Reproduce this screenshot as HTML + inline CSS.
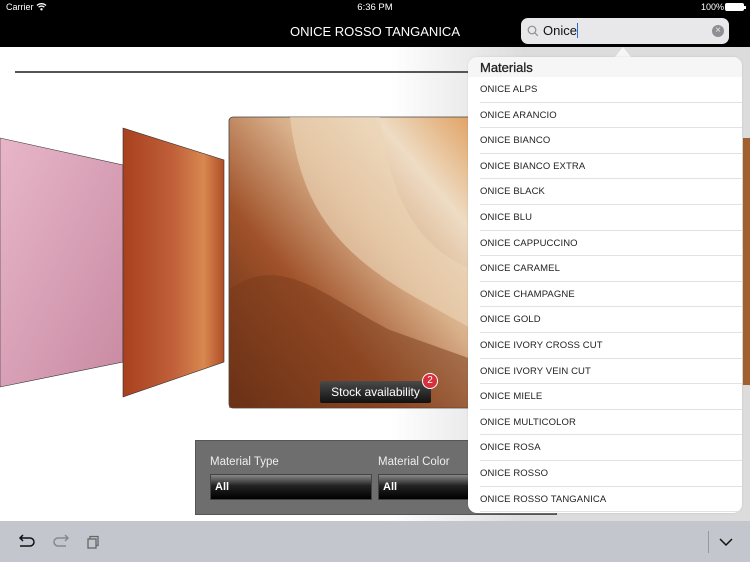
<!DOCTYPE html>
<html><head><meta charset="utf-8"><style>
*{margin:0;padding:0;box-sizing:border-box}
body{width:750px;height:562px;overflow:hidden;position:relative;font-family:"Liberation Sans",sans-serif;background:#fff}
.abs{position:absolute}
#top{left:0;top:0;width:750px;height:47px;background:#000;color:#fff}
#content{left:0;top:47px;width:750px;height:474px;background:linear-gradient(90deg,#fff 0,#fff 52%,#dcdcdc 70%,#dcdcdc 100%)}
#tb{left:0;top:521px;width:750px;height:41px;background:#c3c6cc}
.row{position:absolute;left:12px;right:0;height:25.6px;border-bottom:1px solid #e2e2e2;font-size:9.5px;color:#222;line-height:25px;letter-spacing:.1px}
</style></head><body>
<div id="top" class="abs">
 <div class="abs" style="left:6px;top:2px;font-size:9px">Carrier <svg width="11" height="9" viewBox="0 0 11 9" style="vertical-align:-1px"><path d="M1 3.5a6.5 6.5 0 0 1 9 0M2.6 5.2a4.2 4.2 0 0 1 5.8 0" stroke="#fff" stroke-width="1.3" fill="none"/><circle cx="5.5" cy="7.3" r="1.2" fill="#fff"/></svg></div>
 <div class="abs" style="left:0;width:750px;top:2px;text-align:center;font-size:9.5px">6:36 PM</div>
 <div class="abs" style="left:701px;top:2px;font-size:9px">100%</div>
 <div class="abs" style="left:725px;top:3px;width:19px;height:8px;background:#fff;border-radius:2px"></div>
 <div class="abs" style="left:744px;top:5.5px;width:1.5px;height:3px;background:#fff"></div>
 <div class="abs" style="left:0;width:750px;top:24px;text-align:center;font-size:13px">ONICE ROSSO TANGANICA</div>
 <div class="abs" style="left:521px;top:18px;width:208px;height:26px;background:#e8e8ea;border-radius:7px"></div>
 <svg class="abs" style="left:527px;top:25px" width="12" height="12" viewBox="0 0 12 12"><circle cx="5" cy="5" r="3.8" stroke="#8e8e93" stroke-width="1.2" fill="none"/><path d="M7.8 7.8l3 3" stroke="#8e8e93" stroke-width="1.3"/></svg>
 <div class="abs" style="left:543px;top:23px;font-size:13px;color:#111">Onice<span style="display:inline-block;width:1.5px;height:15px;background:#2a6ae0;vertical-align:-3px"></span></div>
 <div class="abs" style="left:712px;top:25px;width:12px;height:12px;border-radius:50%;background:#8e8e93;color:#e8e8ea;font-size:10px;line-height:12px;text-align:center">×</div>
</div>
<div id="content" class="abs"></div>
<div class="abs" style="left:15px;top:71px;width:453px;height:2px;background:#555"></div>
<svg class="abs" style="left:0;top:0" width="750" height="562">
 <defs>
 <linearGradient id="pk" x1="0" y1="0" x2="1" y2="1"><stop offset="0" stop-color="#e8b6c8"/><stop offset=".5" stop-color="#d8a0b6"/><stop offset="1" stop-color="#c88aa2"/></linearGradient>
 <linearGradient id="rd" x1="0" y1="0" x2="1" y2="0"><stop offset="0" stop-color="#a8401e"/><stop offset=".5" stop-color="#c0603a"/><stop offset=".8" stop-color="#d88850"/><stop offset="1" stop-color="#b04e28"/></linearGradient>
 <linearGradient id="mn" x1="0" y1="1" x2="1" y2="0"><stop offset="0" stop-color="#5a2812"/><stop offset=".35" stop-color="#a0522a"/><stop offset=".6" stop-color="#d8b08a"/><stop offset=".8" stop-color="#eedcc4"/><stop offset="1" stop-color="#e0a060"/></linearGradient>
 </defs>
 <polygon points="0,138 123,165 123,362 0,387" fill="url(#pk)" stroke="#333" stroke-width=".6"/>
 <polygon points="123,128 224,160 224,362 123,397" fill="url(#rd)" stroke="#333" stroke-width=".6"/>
 <rect x="229" y="117" width="245" height="291" rx="4" fill="url(#mn)" stroke="#444" stroke-width=".8"/>
 <path d="M290 117 C300 200 330 250 420 300 L474 330 L474 270 C420 250 390 200 380 117Z" fill="#ecd6b8" opacity=".6"/>
 <path d="M229 290 C280 250 330 300 390 330 L474 360 L474 408 L229 408Z" fill="#7a3a1a" opacity=".5"/>
 <rect x="743" y="138" width="7" height="247" fill="#a06030"/>
</svg>
<div class="abs" style="left:320px;top:381px;width:111px;height:22px;background:linear-gradient(#4a4a4a,#111);border-radius:2px;color:#fff;font-size:12px;text-align:center;line-height:22px">Stock availability</div>
<div class="abs" style="left:422px;top:373px;width:16px;height:16px;border-radius:50%;background:#d6303a;border:1.5px solid #fff;color:#fff;font-size:10px;text-align:center;line-height:13px">2</div>
<div class="abs" style="left:195px;top:440px;width:362px;height:75px;background:#6e6e6e;border:1px solid #555"></div>
<div class="abs" style="left:210px;top:456px;font-size:11.5px;color:#eee">Material Type</div>
<div class="abs" style="left:378px;top:456px;font-size:11.5px;color:#eee">Material Color</div>
<div class="abs" style="left:210px;top:474px;width:162px;height:26px;background:linear-gradient(#888,#222 45%,#000);border:1px solid #444;color:#fff;font-weight:bold;font-size:11px;padding:6px 4px">All</div>
<div class="abs" style="left:378px;top:474px;width:100px;height:26px;background:linear-gradient(#888,#222 45%,#000);border:1px solid #444;color:#fff;font-weight:bold;font-size:11px;padding:6px 4px">All</div>
<div class="abs" style="left:615px;top:47px;width:0;height:0;border-left:8px solid transparent;border-right:8px solid transparent;border-bottom:10px solid #f6f6f6"></div>
<div class="abs" style="left:468px;top:57px;width:274px;height:456px;background:#fff;border-radius:9px;overflow:hidden;box-shadow:0 0 2px rgba(0,0,0,.1)">
 <div style="height:20px;background:#f6f6f6;font-size:13px;color:#222;padding:3px 0 0 12px;-webkit-text-stroke:.3px #222">Materials</div>
 <div style="position:relative">
 <div class="row" style="top:0">ONICE ALPS</div>
 <div class="row" style="top:25.6px">ONICE ARANCIO</div>
 <div class="row" style="top:51.2px">ONICE BIANCO</div>
 <div class="row" style="top:76.8px">ONICE BIANCO EXTRA</div>
 <div class="row" style="top:102.4px">ONICE BLACK</div>
 <div class="row" style="top:128px">ONICE BLU</div>
 <div class="row" style="top:153.6px">ONICE CAPPUCCINO</div>
 <div class="row" style="top:179.2px">ONICE CARAMEL</div>
 <div class="row" style="top:204.8px">ONICE CHAMPAGNE</div>
 <div class="row" style="top:230.4px">ONICE GOLD</div>
 <div class="row" style="top:256px">ONICE IVORY CROSS CUT</div>
 <div class="row" style="top:281.6px">ONICE IVORY VEIN CUT</div>
 <div class="row" style="top:307.2px">ONICE MIELE</div>
 <div class="row" style="top:332.8px">ONICE MULTICOLOR</div>
 <div class="row" style="top:358.4px">ONICE ROSA</div>
 <div class="row" style="top:384px">ONICE ROSSO</div>
 <div class="row" style="top:409.6px">ONICE ROSSO TANGANICA</div>
 </div>
</div>
<div id="tb" class="abs">
 <svg class="abs" style="left:16px;top:12px" width="90" height="18" viewBox="0 0 90 18">
  <path d="M4 5h10a4 4 0 0 1 0 8H4M7 2L4 5l3 3" stroke="#111" stroke-width="1.5" fill="none"/>
  <path d="M52 5H42a4 4 0 0 0 0 8h8M49 2l3 3-3 3" stroke="#888" stroke-width="1.5" fill="none"/>
  <rect x="72" y="6" width="8" height="9" stroke="#666" stroke-width="1.3" fill="none"/>
  <path d="M74 6V3.5h8v9h-2" stroke="#666" stroke-width="1.3" fill="none"/>
 </svg>
 <div class="abs" style="left:708px;top:10px;width:1px;height:22px;background:#999"></div>
 <svg class="abs" style="left:718px;top:16px" width="16" height="10" viewBox="0 0 16 10"><path d="M2 2l6 6 6-6" stroke="#111" stroke-width="1.5" fill="none"/></svg>
</div>
</body></html>
